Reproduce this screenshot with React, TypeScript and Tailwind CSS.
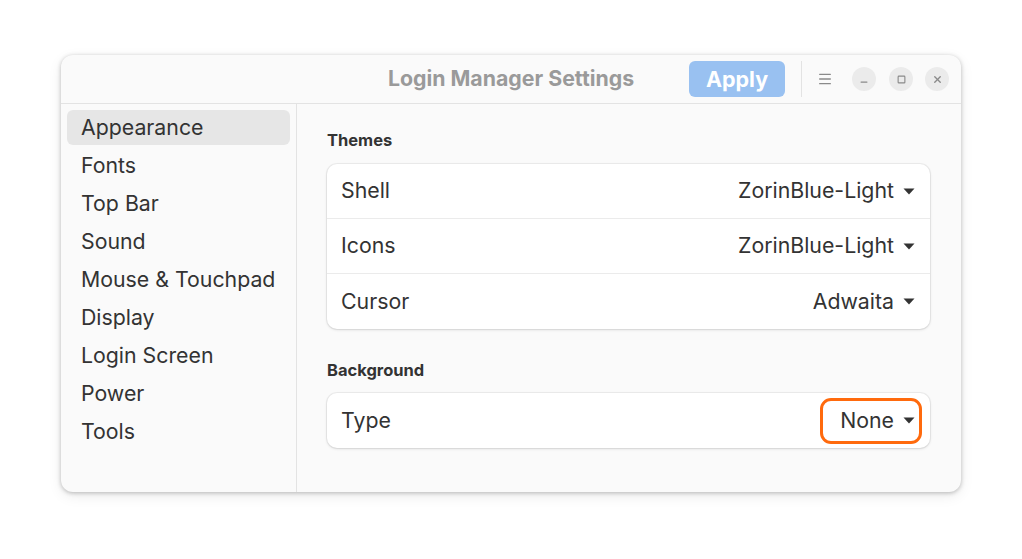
import { Menu, X, Minus, Square } from "lucide-react"

const sections = ["Appearance", "Fonts", "Top Bar", "Sound", "Mouse & Touchpad", "Display", "Login Screen", "Power", "Tools"]

function Caret() {
  return (
    <svg width="12" height="7" viewBox="0 0 12 7" className="ml-[9px]">
      <path d="M0.5 0.5 L11.5 0.5 L6 6.5 Z" fill="#333" />
    </svg>
  )
}

function Row({ label, value, last, highlight }: { label: string; value: string; last?: boolean; highlight?: boolean }) {
  return (
    <div className={`flex h-[55px] items-center justify-between pl-[14px] pr-[15px] ${last ? "" : "border-b border-[#ebebeb]"}`}>
      <span>{label}</span>
      {highlight ? (
        <div className="-mr-[7px] flex h-[46px] items-center rounded-[11px] border-[3px] border-[#ff6a0d] pl-[17px] pr-[4px]">
          <span>{value}</span>
          <Caret />
        </div>
      ) : (
        <div className="flex items-center">
          <span>{value}</span>
          <Caret />
        </div>
      )}
    </div>
  )
}

export default function App() {
  return (
    <div className="flex h-[559px] w-[1022px] bg-white pl-[61px] pt-[55px] font-['Inter',sans-serif] text-[#333]">
      <div className="flex h-[437px] w-[900px] flex-col overflow-hidden rounded-[12px] bg-[#fafafa] shadow-[0_1px_4px_rgba(0,0,0,0.25),0_4px_14px_rgba(0,0,0,0.08)]">
        <div className="relative flex h-[49px] shrink-0 items-center border-b border-[#e3e3e3]">
          <div className="absolute inset-0 flex items-center justify-center text-[21.3px] font-bold text-[#9a9a9a]">
            Login Manager Settings
          </div>
          <div className="relative ml-auto flex items-center pr-[12px]">
            <div className="flex h-[36px] w-[96px] items-center justify-center rounded-[6px] bg-[#99c1f1] text-[21.5px] font-bold text-white">
              Apply
            </div>
            <div className="ml-[16px] h-[36px] w-px bg-[#e3e3e3]" />
            <div className="ml-[15px] flex w-[16px] items-center justify-center text-[#8a8a8a]">
              <Menu size={18} strokeWidth={2} />
            </div>
            <div className="ml-[19px] flex h-[24px] w-[24px] items-center justify-center rounded-full bg-[#ebebeb] text-[#8a8a8a]">
              <Minus size={10} strokeWidth={3} className="mt-[5px]" />
            </div>
            <div className="ml-[13px] flex h-[24px] w-[24px] items-center justify-center rounded-full bg-[#ebebeb] text-[#8a8a8a]">
              <Square size={9} strokeWidth={3} />
            </div>
            <div className="ml-[12px] flex h-[24px] w-[24px] items-center justify-center rounded-full bg-[#ebebeb] text-[#8a8a8a]">
              <X size={11} strokeWidth={3} />
            </div>
          </div>
        </div>
        <div className="flex flex-1">
          <div className="flex w-[236px] shrink-0 flex-col border-r border-[#e3e3e3] px-[6px] pt-[6px]">
            {sections.map((s, i) => (
              <div
                key={s}
                className={`flex h-[35px] items-center rounded-[6px] pl-[14px] text-[21.3px] ${i === 0 ? "bg-[#e6e6e6]" : ""} ${i > 0 ? "mt-[3px]" : ""}`}
              >
                {s}
              </div>
            ))}
          </div>
          <div className="flex flex-1 flex-col pl-[30px] pr-[31px] pt-[26px] text-[21.3px]">
            <div className="mb-[14px] text-[16.5px] font-bold leading-[20px] text-[#333]">Themes</div>
            <div className="rounded-[10px] bg-white shadow-[0_0_0_1px_rgba(0,0,0,0.05),0_1px_3px_rgba(0,0,0,0.12)]">
              <Row label="Shell" value="ZorinBlue-Light" />
              <Row label="Icons" value="ZorinBlue-Light" />
              <Row label="Cursor" value="Adwaita" last />
            </div>
            <div className="mb-[13px] mt-[31px] text-[16.5px] font-bold leading-[20px] text-[#333]">Background</div>
            <div className="rounded-[10px] bg-white shadow-[0_0_0_1px_rgba(0,0,0,0.05),0_1px_3px_rgba(0,0,0,0.12)]">
              <Row label="Type" value="None" last highlight />
            </div>
          </div>
        </div>
      </div>
    </div>
  )
}
